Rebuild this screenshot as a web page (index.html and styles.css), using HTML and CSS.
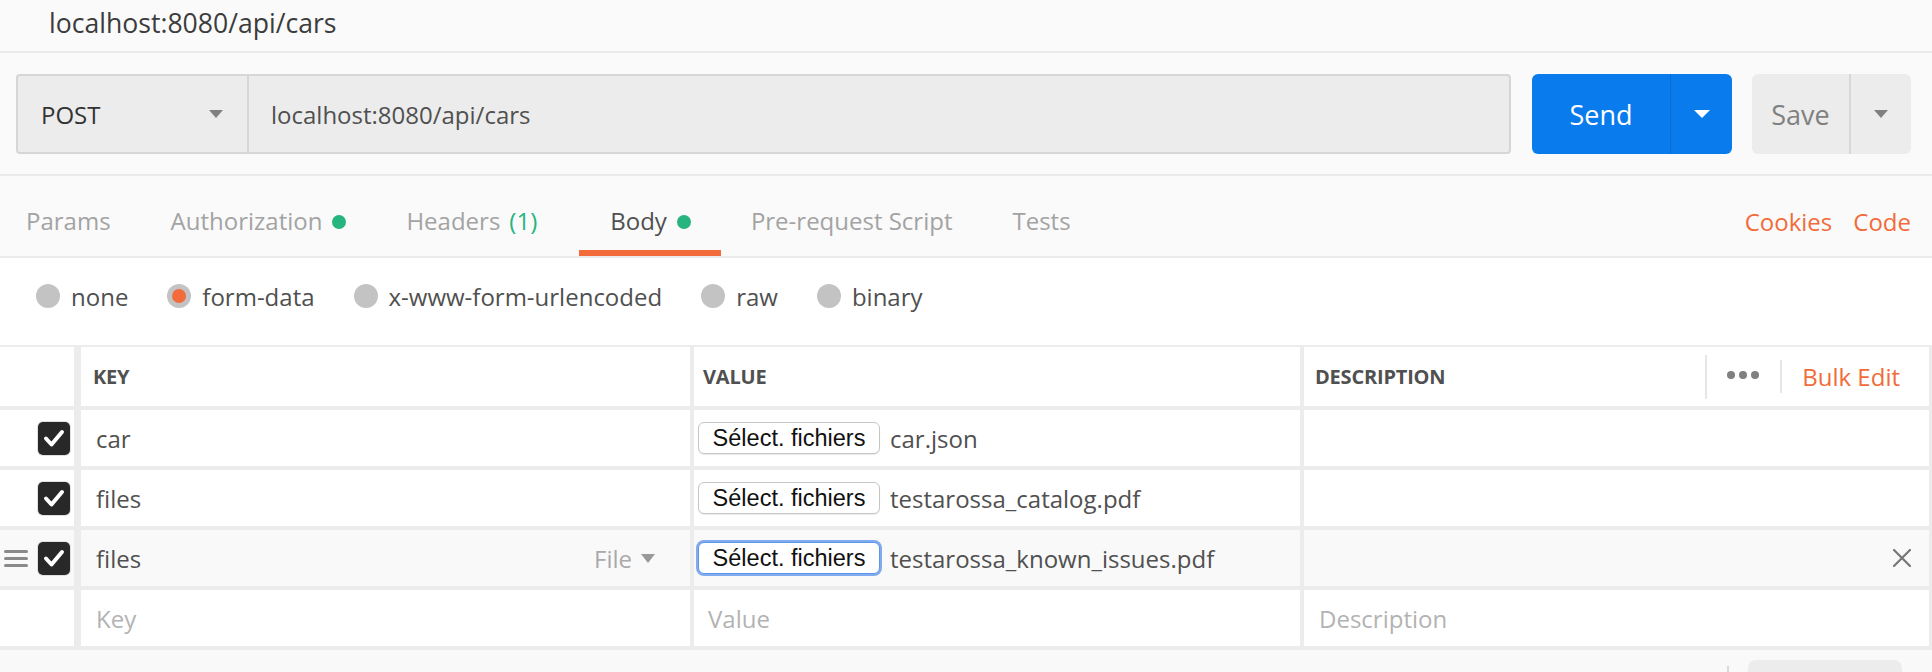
FILE: index.html
```html
<!DOCTYPE html>
<html lang="fr">
<head>
<meta charset="utf-8">
<title>localhost:8080/api/cars</title>
<link rel="stylesheet" href="styles.css">
</head>
<body>
<div class="app">
  <header class="titlebar"><span class="title">localhost:8080/api/cars</span></header>

  <section class="reqbar">
    <div class="urlgroup">
      <div class="method"><span>POST</span><span class="tri grey"></span></div>
      <div class="url">localhost:8080/api/cars</div>
    </div>
    <div class="btn send">
      <span class="btn-main">Send</span>
      <span class="btn-arrow"><span class="tri white"></span></span>
    </div>
    <div class="btn save">
      <span class="btn-main">Save</span>
      <span class="btn-arrow"><span class="tri grey"></span></span>
    </div>
  </section>

  <nav class="tabs">
    <div class="tablist">
      <span class="tab first">Params</span>
      <span class="tab">Authorization<i class="dot"></i></span>
      <span class="tab">Headers<span class="count">(1)</span></span>
      <span class="tab active">Body<i class="dot"></i></span>
      <span class="tab">Pre-request Script</span>
      <span class="tab">Tests</span>
    </div>
    <div class="tablinks"><span>Cookies</span><span>Code</span></div>
  </nav>

  <section class="bodytypes">
    <span class="radio"><span class="rc"></span>none</span>
    <span class="radio"><span class="rc on"></span>form-data</span>
    <span class="radio"><span class="rc"></span>x-www-form-urlencoded</span>
    <span class="radio"><span class="rc"></span>raw</span>
    <span class="radio"><span class="rc"></span>binary</span>
  </section>

  <section class="table">
    <div class="row head">
      <div class="cell c-check"></div>
      <div class="cell c-key"><span class="hlabel">KEY</span></div>
      <div class="cell c-val"><span class="hlabel">VALUE</span></div>
      <div class="cell c-desc">
        <span class="hlabel">DESCRIPTION</span>
        <span class="hsep tall"></span>
        <span class="dots"><i></i><i></i><i></i></span>
        <span class="hsep short"></span>
        <span class="bulk">Bulk Edit</span>
      </div>
    </div>

    <div class="row">
      <div class="cell c-check"><span class="cb"><svg viewBox="0 0 32 32" width="32" height="32"><polyline points="8,16.5 13.5,22.5 24,10" fill="none" stroke="#fff" stroke-width="4" stroke-linecap="round" stroke-linejoin="round"/></svg></span></div>
      <div class="cell c-key"><span class="txt">car</span></div>
      <div class="cell c-val"><span class="filebtn">Sélect. fichiers</span><span class="txt fname">car.json</span></div>
      <div class="cell c-desc"></div>
    </div>

    <div class="row">
      <div class="cell c-check"><span class="cb"><svg viewBox="0 0 32 32" width="32" height="32"><polyline points="8,16.5 13.5,22.5 24,10" fill="none" stroke="#fff" stroke-width="4" stroke-linecap="round" stroke-linejoin="round"/></svg></span></div>
      <div class="cell c-key"><span class="txt">files</span></div>
      <div class="cell c-val"><span class="filebtn">Sélect. fichiers</span><span class="txt fname">testarossa_catalog.pdf</span></div>
      <div class="cell c-desc"></div>
    </div>

    <div class="row hover">
      <div class="cell c-check">
        <svg class="handle" viewBox="0 0 24 19" width="24" height="19"><rect x="0" y="1" width="24" height="3" rx="1.5" fill="#8a8a8a"/><rect x="0" y="8" width="24" height="3" rx="1.5" fill="#8a8a8a"/><rect x="0" y="15" width="24" height="3" rx="1.5" fill="#8a8a8a"/></svg>
        <span class="cb"><svg viewBox="0 0 32 32" width="32" height="32"><polyline points="8,16.5 13.5,22.5 24,10" fill="none" stroke="#fff" stroke-width="4" stroke-linecap="round" stroke-linejoin="round"/></svg></span>
      </div>
      <div class="cell c-key"><span class="txt">files</span><span class="ftype">File<span class="tri grey small"></span></span></div>
      <div class="cell c-val"><span class="filebtn focus">Sélect. fichiers</span><span class="txt fname">testarossa_known_issues.pdf</span></div>
      <div class="cell c-desc"><svg class="close" viewBox="0 0 18 18" width="18" height="18"><path d="M1 1 L17 17 M17 1 L1 17" stroke="#777" stroke-width="2.2" stroke-linecap="round"/></svg></div>
    </div>

    <div class="row">
      <div class="cell c-check"></div>
      <div class="cell c-key"><span class="ph">Key</span></div>
      <div class="cell c-val"><span class="ph">Value</span></div>
      <div class="cell c-desc"><span class="ph">Description</span></div>
    </div>
  </section>

  <footer class="footer"><span class="fline"></span><span class="fbtn"></span></footer>
</div>
</body>
</html>
```

FILE: styles.css
```css
* { box-sizing: border-box; margin: 0; padding: 0; }
html, body { width: 1932px; height: 672px; overflow: hidden; }
body {
  font-family: "Open Sans", "Liberation Sans", sans-serif;
  font-size: 24px;
  color: #505050;
  background: #fafafa;
}

/* title */
.titlebar {
  height: 53px;
  border-bottom: 2px solid #e9e9e9;
  display: flex;
  align-items: center;
  padding: 0 0 5px 49px;
}
.title { font-size: 26.6px; color: #3c3c3c; }

/* request bar */
.reqbar {
  display: flex;
  padding: 21px 21px 20px 16px;
  border-bottom: 2px solid #ebebeb;
}
.urlgroup {
  flex: 1;
  height: 80px;
  display: flex;
  background: #ececec;
  border: 2px solid #d6d6d6;
  border-radius: 4px;
}
.method {
  width: 231px;
  display: flex;
  align-items: center;
  justify-content: space-between;
  padding: 0 24px 0 23px;
  border-right: 2px solid #d6d6d6;
  color: #333;
}
.url { display: flex; align-items: center; padding-left: 22px; color: #505050; }

.tri {
  display: inline-block;
  width: 0; height: 0;
  border-left: 7px solid transparent;
  border-right: 7px solid transparent;
  border-top: 8px solid #808080;
}
.tri.white { border-top-color: #fff; border-left-width: 8px; border-right-width: 8px; }
.tri.small { border-left-width: 7px; border-right-width: 7px; border-top-width: 9px; margin-left: 9px; border-top-color: #999; }

.btn {
  height: 80px;
  display: flex;
  border-radius: 6px;
  font-size: 27px;
}
.btn-main, .btn-arrow { display: flex; align-items: center; justify-content: center; }
.send { margin-left: 21px; width: 200px; background: #097bed; color: #fff; }
.send .btn-main { width: 139px; border-right: 1px solid #0a6cd3; }
.send .btn-arrow { flex: 1; }
.save { margin-left: 20px; width: 159px; background: #ececec; color: #808080; }
.save .btn-main { width: 99px; border-right: 2px solid #d8d8d8; }
.save .btn-arrow { flex: 1; }

/* tabs */
.tabs {
  height: 82px;
  display: flex;
  justify-content: space-between;
  border-bottom: 2px solid #ebebeb;
}
.tablist { display: flex; }
.tab {
  height: 80px;
  display: flex;
  align-items: center;
  padding: 15px 30px 0 30px;
  border-bottom: 6px solid transparent;
  color: #a3a3a3;
}
.tab.first { padding-left: 26px; }
.tab.active { color: #505050; border-bottom-color: #f26b3a; padding-left: 31px; margin-left: 12px; }
.dot { width: 14px; height: 14px; border-radius: 50%; background: #26b47f; margin-left: 10px; margin-top: 2px; }
.count { color: #26b47f; margin-left: 9px; }
.tablinks {
  display: flex;
  align-items: center;
  gap: 21px;
  padding: 10px 21px 0 0;
  color: #f26b3a;
}

/* body types */
.bodytypes {
  height: 87px;
  background: #fff;
  display: flex;
  align-items: center;
  gap: 39px;
  padding: 0 0 11px 36px;
}
.radio { display: flex; align-items: center; color: #505050; }
.rc {
  width: 24px; height: 24px;
  border-radius: 50%;
  background: #c3c3c3;
  margin-right: 11px;
  display: flex; align-items: center; justify-content: center;
}
.rc.on::after { content: ""; width: 14px; height: 14px; border-radius: 50%; background: #f26b3a; }

/* table */
.table { border-top: 2px solid #ececec; background: #fff; }
.row {
  display: grid;
  grid-template-columns: 81px 613px 610px 1fr;
  height: 60px;
  border-bottom: 4px solid #ececec;
}
.row.head { height: 63px; }
.row.hover { background: #f9f9f9; }
.cell { display: flex; align-items: center; border-right: 4px solid #ececec; }
.c-check { border-right-width: 7px; padding: 0 4px; }
.c-key { padding-left: 15px; padding-right: 35px; }
.c-val { padding-left: 4px; }
.c-desc { border-right-width: 3px; padding-left: 15px; padding-right: 29px; }
.head .c-key { padding-left: 12px; }
.head .c-val { padding-left: 9px; }
.head .c-desc { padding-left: 11px; }

.hlabel { font-size: 20px; font-weight: 700; color: #505050; letter-spacing: -0.2px; }
.hsep { width: 2px; background: #e6e6e6; }
.hsep.tall { height: 44px; margin-left: auto; }
.hsep.short { height: 33px; }
.dots { display: flex; gap: 4px; margin: 0 21px 4px 20px; }
.dots i { width: 8px; height: 8px; border-radius: 50%; background: #808080; }
.bulk { color: #f26b3a; margin-left: 20px; }

.cb {
  margin-left: auto;
  width: 32px; height: 33px;
  border-radius: 5px;
  background: #282828;
  box-shadow: 0 0 0 1px #e0e0e0;
  display: flex; align-items: center; justify-content: center;
}
.handle { margin-left: 0; }
.txt { color: #505050; }
.ph { color: #b3b3b3; }
.c-val .ph { padding-left: 10px; }
.ftype { margin-left: auto; color: #aaa; display: flex; align-items: center; }

.filebtn {
  font-family: "Liberation Sans", Arial, sans-serif;
  font-size: 23.5px;
  color: #111;
  width: 182px;
  height: 32px;
  display: flex; align-items: center; justify-content: center;
  background: #fff;
  border: 1px solid #c6c6c6;
  border-radius: 6px;
  box-shadow: 0 1px 1px rgba(0,0,0,0.08);
}
.filebtn.focus { border-color: #5f95e6; box-shadow: 0 0 0 2px #80abee; }
.fname { margin-left: 10px; }
.close { margin-left: auto; margin-right: -11px; }

/* footer */
.footer {
  height: 22px;
  background: #f9f9f9;
  display: flex;
  justify-content: flex-end;
  align-items: flex-start;
  padding-right: 30px;
}
.fline { width: 2px; height: 6px; margin-top: 16px; background: #d8d8d8; }
.fbtn { width: 154px; height: 30px; margin-top: 10px; margin-left: 19px; background: #ececec; border-radius: 8px; }
```
